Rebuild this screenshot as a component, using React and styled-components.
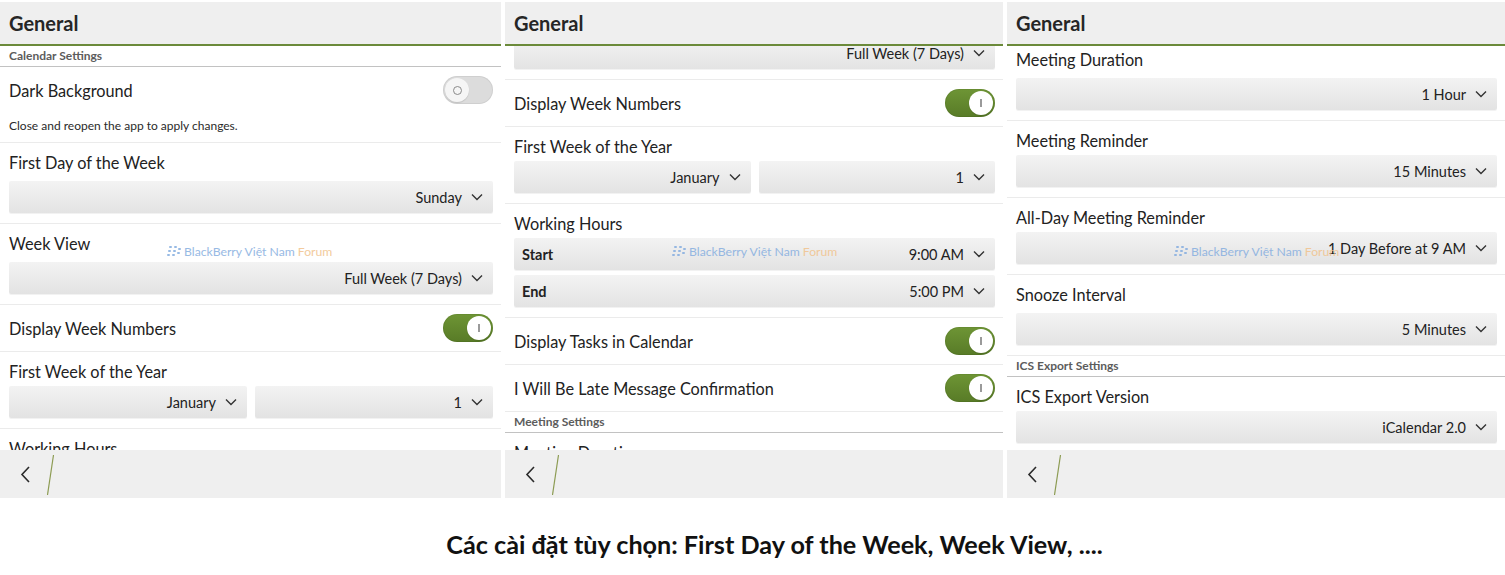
import React, { useLayoutEffect, useRef } from "react";
import styled, { createGlobalStyle } from "styled-components";

const GlobalStyle = createGlobalStyle`
  html, body {
    margin: 0;
    padding: 0;
    background: #fff;
  }
  body {
    font-family: Lato, "Open Sans", sans-serif;
    color: #1f1f1f;
  }
`;

// one long settings list, each screen shows it at a different scroll offset
const settings = [
  { type: "section", title: "Calendar Settings" },
  {
    type: "toggle",
    label: "Dark Background",
    on: false,
    note: "Close and reopen the app to apply changes.",
  },
  { type: "select", label: "First Day of the Week", values: ["Sunday"] },
  { type: "select", label: "Week View", values: ["Full Week (7 Days)"] },
  { type: "toggle", label: "Display Week Numbers", on: true },
  {
    type: "select",
    label: "First Week of the Year",
    values: ["January", "1"],
    tight: true,
  },
  {
    type: "hours",
    label: "Working Hours",
    items: [
      { name: "Start", value: "9:00 AM" },
      { name: "End", value: "5:00 PM" },
    ],
  },
  { type: "toggle", label: "Display Tasks in Calendar", on: true },
  { type: "toggle", label: "I Will Be Late Message Confirmation", on: true },
  { type: "section", title: "Meeting Settings" },
  { type: "select", label: "Meeting Duration", values: ["1 Hour"] },
  { type: "select", label: "Meeting Reminder", values: ["15 Minutes"], tight: true },
  {
    type: "select",
    label: "All-Day Meeting Reminder",
    values: ["1 Day Before at 9 AM"],
    tight: true,
  },
  { type: "select", label: "Snooze Interval", values: ["5 Minutes"] },
  { type: "section", title: "ICS Export Settings" },
  {
    type: "select",
    label: "ICS Export Version",
    values: ["iCalendar 2.0"],
    tight: true,
  },
];

const screens = [{ scroll: 0 }, { scroll: 225 }, { scroll: 618 }];

const Page = styled.div`
  width: 1505px;
  height: 575px;
  overflow: hidden;
  background: #fff;
`;

const Screens = styled.div`
  display: grid;
  grid-template-columns: 501px 498px 498px;
  column-gap: 4px;
  padding-top: 2px;
`;

const Phone = styled.section`
  display: flex;
  flex-direction: column;
  height: 496px;
  background: #fff;
`;

const TitleBar = styled.header`
  height: 42px;
  flex-shrink: 0;
  display: flex;
  align-items: center;
  padding-left: 9px;
  background: #efefef;
  border-bottom: 2px solid #6b8a3a;
  font-size: 20px;
  font-weight: 700;
  color: #262626;
`;

const Viewport = styled.div`
  position: relative;
  flex: 1;
  min-height: 0;
`;

const Scroller = styled.div`
  height: 100%;
  overflow-y: auto;
  scrollbar-width: none;
  &::-webkit-scrollbar {
    display: none;
  }
`;

const SectionHead = styled.div`
  height: 20px;
  line-height: 20px;
  padding-left: 9px;
  font-size: 12px;
  font-weight: 700;
  color: #5c5c5c;
  border-bottom: 1px solid #c2c2c2;
`;

const Row = styled.div`
  padding: ${(p) => (p.$select ? "9px 8px 10px 9px" : "0 8px 0 9px")};
  border-bottom: 1px solid #ebebeb;
`;

const ToggleLine = styled.div`
  height: 46px;
  display: flex;
  align-items: center;
  justify-content: space-between;
`;

const Label = styled.div`
  font-size: 16.3px;
  line-height: 22px;
  color: #222;
`;

const ToggleLabel = styled(Label)`
  padding-top: 2px;
`;

const Note = styled.div`
  font-size: 12px;
  line-height: 20px;
  padding: 3px 0 6px;
  color: #2a2a2a;
`;

const Switch = styled.div`
  width: 50px;
  height: 28px;
  box-sizing: border-box;
  padding: 2px;
  border-radius: 14px;
  display: flex;
  justify-content: ${(p) => (p.$on ? "flex-end" : "flex-start")};
  background: ${(p) =>
    p.$on ? "linear-gradient(#6e9535, #587b27)" : "#dcdcdc"};
  box-shadow: inset 0 0 0 1px rgba(0, 0, 0, 0.06);
`;

const Knob = styled.span`
  width: 24px;
  height: 24px;
  border-radius: 50%;
  background: ${(p) => (p.$on ? "#fff" : "#f5f5f5")};
  display: flex;
  align-items: center;
  justify-content: center;
  box-shadow: 0 1px 1px rgba(0, 0, 0, 0.12);
`;

const OnMark = styled.span`
  width: 1.5px;
  height: 8px;
  background: #9a9a9a;
`;

const OffMark = styled.span`
  width: 7px;
  height: 7px;
  border-radius: 50%;
  border: 1.3px solid #8a8a8a;
`;

const Fields = styled.div`
  margin-top: ${(p) => (p.$tight ? 3 : 7)}px;
  display: grid;
  grid-template-columns: repeat(${(p) => p.$cols}, 1fr);
  gap: 8px;
`;

const Stack = styled.div`
  margin-top: 3px;
  display: flex;
  flex-direction: column;
  gap: 5px;
`;

const Dropdown = styled.div`
  height: 32px;
  display: flex;
  align-items: center;
  gap: 9px;
  padding: 0 10px 0 8px;
  border-radius: 2px;
  background: linear-gradient(#f3f3f3, #e3e3e3);
  box-shadow: 0 1px 0 rgba(0, 0, 0, 0.05);
  font-size: 14.5px;
  color: #222;
`;

const FieldName = styled.span`
  font-weight: 700;
  font-size: 14.5px;
  margin-right: auto;
`;

const Value = styled.span`
  margin-left: auto;
`;

const Watermark = styled.div`
  position: absolute;
  top: 198px;
  left: 167px;
  display: flex;
  align-items: center;
  gap: 2px;
  font-size: 12.2px;
  color: #86aee0;
  opacity: 0.85;
  pointer-events: none;
`;

const Forum = styled.span`
  color: #f1c38d;
`;

const ActionBar = styled.footer`
  height: 48px;
  flex-shrink: 0;
  display: flex;
  align-items: flex-start;
  background: #efefef;
`;

const BackButton = styled.div`
  width: 27px;
  height: 48px;
  padding-left: 20px;
  display: flex;
  align-items: center;
`;

const Caption = styled.p`
  margin: 0;
  height: 77px;
  box-sizing: border-box;
  padding: 15px 0 0 44px;
  display: flex;
  align-items: center;
  justify-content: center;
  font-family: Lato, "Open Sans", sans-serif;
  font-weight: 700;
  font-size: 25.2px;
  color: #111;
`;

const Chevron = () => (
  <svg width="12" height="8" viewBox="0 0 12 8">
    <polyline
      points="1,1.5 6,6.5 11,1.5"
      fill="none"
      stroke="#333"
      strokeWidth="1.4"
    />
  </svg>
);

const BBLogo = () => (
  <svg width="15" height="11" viewBox="0 0 15 11" fill="#86aee0">
    <rect x="2" y="0" width="3" height="2" rx="1" />
    <rect x="7" y="0" width="3" height="2" rx="1" />
    <rect x="1" y="4" width="3" height="2" rx="1" />
    <rect x="6" y="4" width="3" height="2" rx="1" />
    <rect x="11" y="2" width="3" height="2" rx="1" />
    <rect x="0" y="8" width="3" height="2" rx="1" />
    <rect x="5" y="8" width="3" height="2" rx="1" />
    <rect x="10" y="6" width="3" height="2" rx="1" />
  </svg>
);

const Toggle = ({ on }) => (
  <Switch $on={on}>
    <Knob $on={on}>{on ? <OnMark /> : <OffMark />}</Knob>
  </Switch>
);

const Setting = ({ item }) => {
  if (item.type === "section") {
    return <SectionHead>{item.title}</SectionHead>;
  }
  if (item.type === "toggle") {
    return (
      <Row>
        <ToggleLine>
          <ToggleLabel>{item.label}</ToggleLabel>
          <Toggle on={item.on} />
        </ToggleLine>
        {item.note && <Note>{item.note}</Note>}
      </Row>
    );
  }
  if (item.type === "hours") {
    return (
      <Row $select>
        <Label>{item.label}</Label>
        <Stack>
          {item.items.map((h) => (
            <Dropdown key={h.name}>
              <FieldName>{h.name}</FieldName>
              <span>{h.value}</span>
              <Chevron />
            </Dropdown>
          ))}
        </Stack>
      </Row>
    );
  }
  return (
    <Row $select>
      <Label>{item.label}</Label>
      <Fields $cols={item.values.length} $tight={item.tight}>
        {item.values.map((v) => (
          <Dropdown key={v}>
            <Value>{v}</Value>
            <Chevron />
          </Dropdown>
        ))}
      </Fields>
    </Row>
  );
};

const Screen = ({ scroll }) => {
  const ref = useRef(null);
  useLayoutEffect(() => {
    if (ref.current) ref.current.scrollTop = scroll;
  }, [scroll]);

  return (
    <Phone>
      <TitleBar>General</TitleBar>
      <Viewport>
        <Scroller ref={ref}>
          {settings.map((item, i) => (
            <Setting key={i} item={item} />
          ))}
        </Scroller>
        <Watermark>
          <BBLogo />
          <span>
            BlackBerry Việt Nam <Forum>Forum</Forum>
          </span>
        </Watermark>
      </Viewport>
      <ActionBar>
        <BackButton>
          <svg width="11" height="17" viewBox="0 0 11 17">
            <polyline
              points="9,1 2,8.5 9,16"
              fill="none"
              stroke="#2a2a2a"
              strokeWidth="1.6"
            />
          </svg>
        </BackButton>
        <svg width="9" height="48" viewBox="0 0 9 48">
          <line x1="6.5" y1="5" x2="0.5" y2="45" stroke="#8c9b52" strokeWidth="1.2" />
        </svg>
      </ActionBar>
    </Phone>
  );
};

export default function App() {
  return (
    <Page>
      <GlobalStyle />
      <Screens>
        {screens.map((s, i) => (
          <Screen key={i} scroll={s.scroll} />
        ))}
      </Screens>
      <Caption>Các cài đặt tùy chọn: First Day of the Week, Week View, ....</Caption>
    </Page>
  );
}
